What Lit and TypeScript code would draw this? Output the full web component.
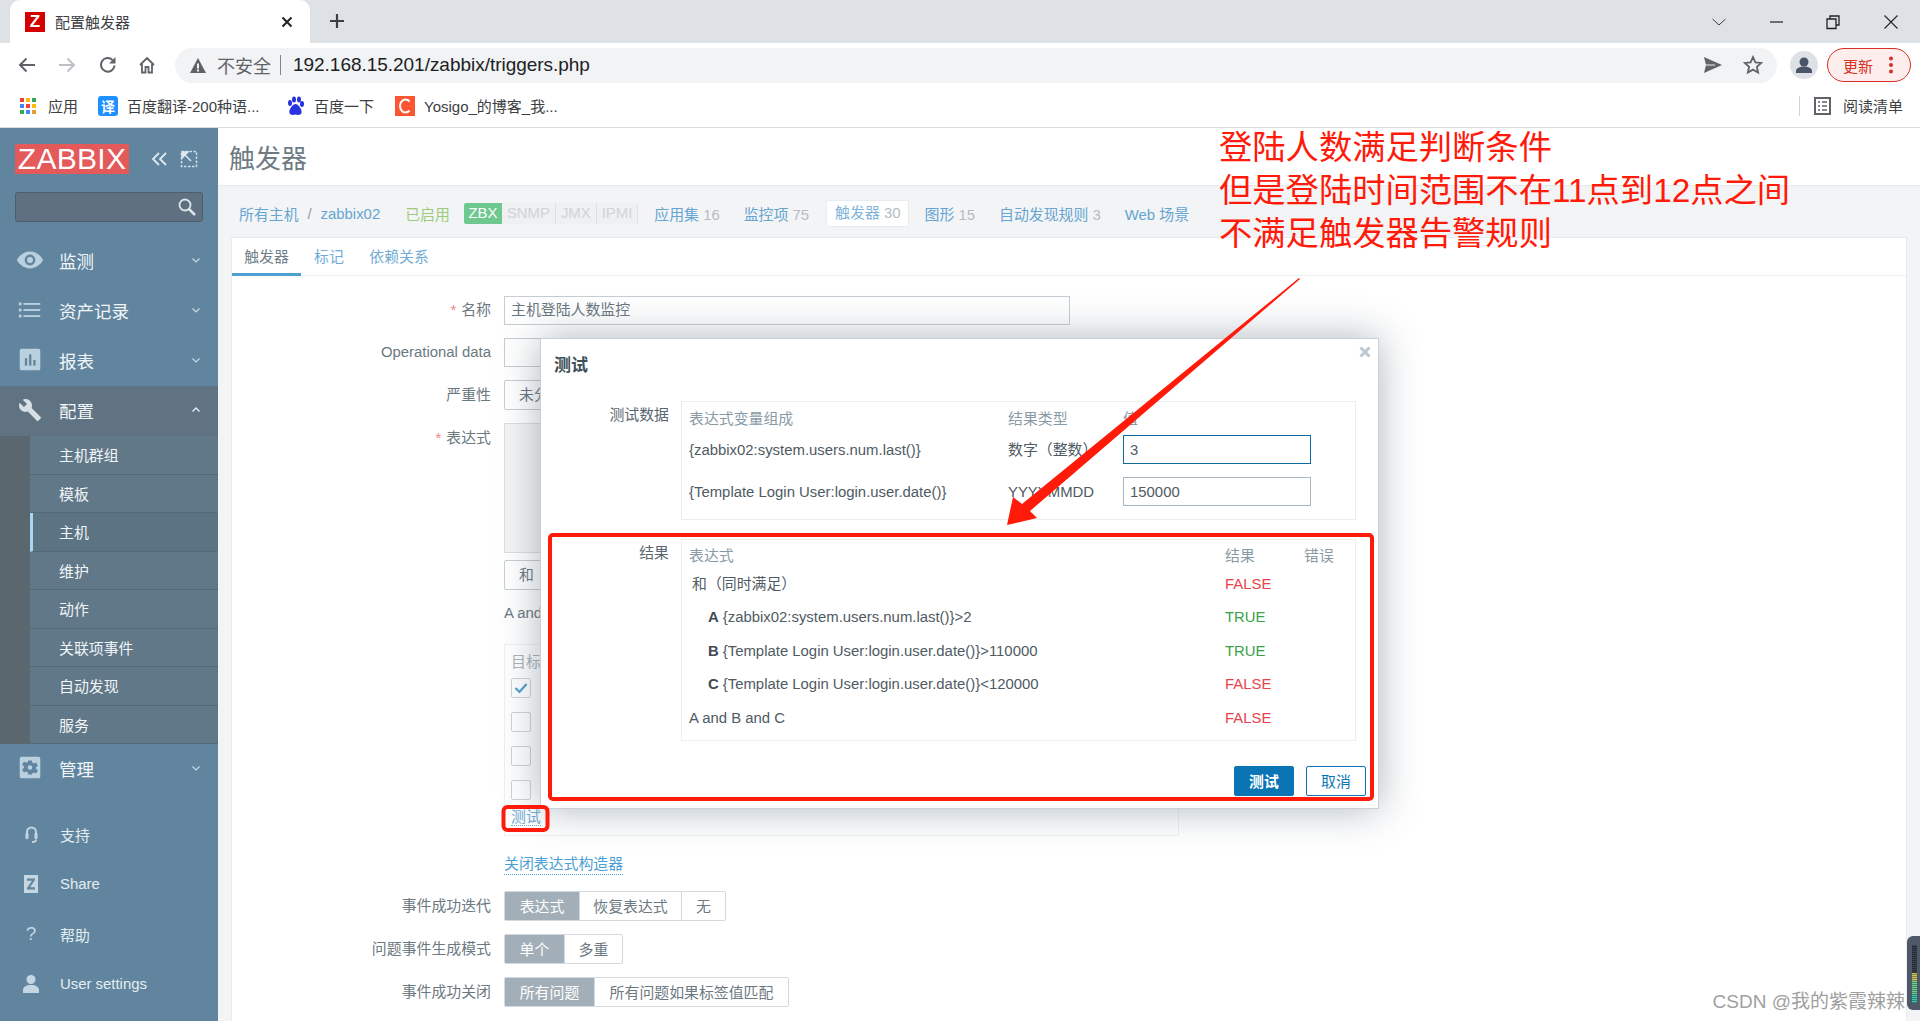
import { LitElement, html, css, svg } from "lit";
import { customElement } from "lit/decorators.js";

const FONT = css`"Liberation Sans", "Noto Sans CJK SC", sans-serif`;

const icons = {
  eye: html`<svg class="mi" viewBox="0 0 30 24"><path fill="#b9d0de" fill-rule="evenodd" d="M15 3C8 3 3 8 1 12c2 4 7 9 14 9s12-5 14-9c-2-4-7-9-14-9zm0 3.2a5.8 5.8 0 1 1 0 11.6 5.8 5.8 0 0 1 0-11.6zm0 2.6a3.2 3.2 0 1 0 0 6.4 3.2 3.2 0 0 0 0-6.4z"/></svg>`,
  list: html`<svg class="mi" viewBox="0 0 30 24"><g fill="#b9d0de"><rect x="3" y="4" width="3" height="3"/><rect x="3" y="10.5" width="3" height="3"/><rect x="3" y="17" width="3" height="3"/><rect x="8" y="4.500" width="18" height="2"/><rect x="8" y="11" width="18" height="2"/><rect x="8" y="17.500" width="18" height="2"/></g></svg>`,
  chart: html`<svg class="mi" viewBox="0 0 30 24"><rect x="4" y="0" width="22" height="23" rx="2" fill="#b9d0de"/><g fill="#61859e"><rect x="9.500" y="10" width="2.500" height="8"/><rect x="14" y="6" width="2.500" height="12"/><rect x="18.500" y="12" width="2.500" height="6"/></g></svg>`,
  wrench: html`<svg class="mi" viewBox="0 0 24 24"><path fill="#d6e0e6" d="M22.7 19l-9.100-9.100c.9-2.300.4-5-1.500-6.900-2-2-5-2.400-7.400-1.300L9 6 6 9 1.600 4.700C.4 7.100.9 10.100 2.900 12.100c1.900 1.900 4.600 2.400 6.900 1.500l9.100 9.100c.4.4 1 .4 1.400 0l2.300-2.300c.5-.4.5-1.100.1-1.400z"/></svg>`,
  gear: html`<svg class="mi" viewBox="0 0 30 24"><rect x="4" y="0" width="22" height="23" rx="2" fill="#b9d0de"/><path fill="#61859e" fill-rule="evenodd" d="M13 4h4l.5 2.500 1.700.8 2.300-1.200 2 3.400-2 1.500v2l2 1.500-2 3.400-2.300-1.200-1.700.8L17 19h-4l-.5-2.500-1.700-.8-2.300 1.200-2-3.400 2-1.500v-2l-2-1.500 2-3.400 2.300 1.200 1.700-.8zm2 5a2.500 2.500 0 1 0 0 5 2.500 2.500 0 0 0 0-5z"/></svg>`,
  head: html`<svg class="bi" viewBox="0 0 24 24"><path fill="none" stroke="#c4d6e1" stroke-width="2" d="M8 14V10a4.500 4.500 0 0 1 9 0v4M13 20c2.500 0 4-1 4-2.500"/><rect x="6.500" y="11" width="3" height="6" rx="1" fill="#c4d6e1"/><rect x="15.500" y="11" width="3" height="6" rx="1" fill="#c4d6e1"/></svg>`,
  z: html`<svg class="bi" viewBox="0 0 24 24"><path fill="#c4d6e1" fill-rule="evenodd" d="M5 3h14v18H5zm3 3.500v2.200h5L8 16v1.500h8v-2.200h-5l5-7.300V6.500z"/></svg>`,
  user: html`<svg class="bi" viewBox="0 0 24 24"><g fill="#c4d6e1"><circle cx="12" cy="7.500" r="4.500"/><path d="M4 21v-3c0-3 3-5 8-5s8 2 8 5v3z"/></g></svg>`,
  chevD: html`<svg class="chev" viewBox="0 0 10 10"><path d="M1.500 3.500 5 7l3.500-3.500" fill="none" stroke="#c9d9e3" stroke-width="1.200"/></svg>`,
  chevU: html`<svg class="chev" viewBox="0 0 10 10"><path d="M1.500 6.500 5 3l3.500 3.500" fill="none" stroke="#e4ecf1" stroke-width="1.400"/></svg>`,
};

@customElement("app-root")
export class AppRoot extends LitElement {
  static styles = css`
    :host { display: block; position: relative; width: 1920px; height: 1021px; overflow: hidden; background: #fff; font-family: ${FONT}; font-size: 14.900px; color: #5f6b73; }
    * { box-sizing: border-box; }
    /* browser chrome */
    .strip { height: 43px; background: #dee1e6; display: flex; align-items: stretch; padding-left: 10px; position: relative; }
    .tab { width: 300px; background: #fff; border-radius: 10px 10px 0 0; display: flex; align-items: center; padding-left: 15px; color: #3c4043; font-size: 15px; }
    .fav { width: 20px; height: 20px; background: #d40000; color: #fff; font: bold 17px/20px "Liberation Sans", sans-serif; text-align: center; margin-right: 10px; }
    .tabt { width: 225px; }
    .tabx { width: 14px; height: 14px; }
    .plus { width: 16px; height: 16px; margin: 13px 0 0 19px; }
    .winctl { margin-left: auto; display: flex; align-items: center; }
    .winctl svg { width: 16px; height: 16px; display: block; }
    .w1 { margin-right: 41px; } .w2 { margin-right: 41px; } .w3 { margin-right: 42px; } .w4 { margin-right: 21px; }
    .tool { height: 44px; display: flex; align-items: center; padding-left: 17px; }
    .nb { width: 20px; height: 20px; margin-right: 20px; display: block; }
    .nb.r { margin-left: 1px; margin-right: 19px; }
    .nb.last { margin-right: 18px; }
    .omni { width: 1602px; height: 35px; border-radius: 18px; background: #f1f3f4; display: flex; align-items: center; padding-left: 15px; position: relative; }
    .warn { width: 16px; height: 15px; margin-right: 11px; }
    .unsafe { color: #5f6368; font-size: 18px; }
    .sep { width: 1px; height: 20px; background: #80868b; margin: 0 12px 0 9px; }
    .url { color: #202124; font-size: 19px; letter-spacing: -.03px; }
    .omr { margin-left: auto; display: flex; align-items: center; padding-right: 14px; }
    .omr svg { display: block; }
    .send { width: 20px; height: 18px; margin-right: 20px; }
    .star { width: 20px; height: 20px; }
    .avatar { width: 28px; height: 28px; border-radius: 50%; background: #dee1e6; margin-left: 13px; }
    .upd { width: 84px; height: 34px; border: 1.500px solid #d93025; border-radius: 17px; background: #fdeeed; margin-left: 9px; display: flex; align-items: center; padding-left: 15px; color: #d93025; font-size: 15px; position: relative; }
    .dots { margin-left: 16px; width: 4px; height: 18px; }
    .marks { height: 41px; display: flex; align-items: center; padding: 0 0 3px 20px; border-bottom: 1.500px solid #dadce0; color: #3c4043; font-size: 15px; white-space: nowrap; }
    .bico { width: 20px; height: 20px; margin-right: 9px; flex: none; display: block; }
    .bm1 { width: 50px; } .bm2 { width: 158px; } .bm3 { width: 81px; } .bm4 { width: 150px; }
    .bmico1 { width: 16px; height: 16px; margin-right: 12px; flex: none; }
    .bmrt { margin-left: auto; display: flex; align-items: center; padding-right: 17px; }
    .bmdiv { width: 1px; height: 20px; background: #d0d3d7; margin-right: 14px; }
    .rdico { width: 17px; height: 18px; margin-right: 12px; }
    /* app layout */
    .main { display: flex; height: 893px; }
    .side { width: 218px; flex: none; background: #61859e; color: #f1f5f8; display: flex; flex-direction: column; }
    .logorow { height: 46px; margin-top: 16px; display: flex; align-items: flex-start; padding-left: 15px; }
    .logo { width: 114px; height: 30px; background: #e45959; color: #fff; font-size: 30px; line-height: 30px; text-align: center; letter-spacing: .3px; }
    .lgic { width: 18px; height: 18px; margin-top: 6px; }
    .lgic1 { margin-left: 21px; } .lgic2 { margin-left: 12px; }
    .search { width: 188px; height: 30px; margin: 2px 0 14px 15px; background: #5f7181; border: 1px solid #4d5e6b; border-radius: 3px; display: flex; align-items: center; justify-content: flex-end; padding-right: 5px; }
    .search svg { width: 20px; height: 20px; }
    .m { height: 50px; display: flex; align-items: center; font-size: 17.500px; padding: 0 0 2px 16px; }
    .m .mi { width: 28px; height: 24px; margin-right: 15px; display: block; flex: none; }
    .m .chev { width: 10px; height: 10px; margin-left: auto; margin-right: 17px; }
    .m.on { background: #5f7382; }
    .sub { background: #5a676e; padding-left: 30px; height: 308px; }
    .si { height: 38.500px; background: #617888; border-bottom: 1.500px solid #556875; display: flex; align-items: center; padding-left: 29px; font-size: 14.900px; }
    .si.on { background: #5c7383; border-left: 3px solid #a9d6f5; padding-left: 26px; }
    .bottom { margin-top: 15px; }
    .bt { height: 50px; display: flex; align-items: center; padding-left: 19px; font-size: 14.900px; color: #e4edf2; }
    .bt .bi { width: 24px; height: 24px; margin-right: 17px; display: block; flex: none; }
    .q { width: 24px; margin-right: 17px; text-align: center; font-size: 19px; color: #c4d6e1; }
    .cont { flex: 1; background: #f3f4f6; min-width: 0; display: flex; flex-direction: column; }
    .head { height: 58px; background: #fff; border-bottom: 1px solid #e6e9ec; padding-left: 11px; display: flex; align-items: center; font-size: 26px; color: #6e7b84; }
    .crumb { height: 51px; padding: 4px 0 0 21px; display: flex; align-items: center; color: #66a5d1; font-size: 14.900px; white-space: nowrap; }
    .crumb .sl { color: #8e9ba4; margin: 0 9px 0 9px; width: 4px; }
    .en { color: #9ccc7c; margin: 0 14px 0 25px; }
    .tags { display: flex; height: 21px; line-height: 21px; margin-right: 16px; border-radius: 2px; overflow: hidden; }
    .tg { background: #eef0f2; color: #ced4d8; padding: 0 5px; border-right: 1px solid #dde1e4; }
    .tg.z { background: #6fc88f; color: #fff; width: 38px; text-align: center; padding: 0; border: 0; }
    .cnt { color: #b4bcc2; }
    .ci { margin-right: 24px; }
    .ci.box2 { background: #fff; border: 1px solid #e9ecef; border-radius: 2px; height: 27px; line-height: 25px; padding: 0 8px; margin: 0 15px 0 -7px; color: #7fb4da; }
    .card { margin-left: 13px; width: 1676px; background: #fff; border: 1px solid #e9ecef; border-bottom: 0; flex: 1; }
    .tabs { height: 38px; display: flex; border-bottom: 1px solid #eceff1; color: #72acd6; }
    .t { display: flex; align-items: center; height: 38px; }
    .t.on { color: #70808a; border-bottom: 3px solid #4f9fd3; width: 69px; justify-content: center; }
    .t.l { padding: 0 12.500px 3px 13px; }
    .form { display: grid; grid-template-columns: 259px 1fr; column-gap: 13px; row-gap: 13px; padding-top: 20px; }
    .lb { text-align: right; color: #6c7981; line-height: 29px; white-space: nowrap; }
    .lb.ex { line-height: 31px; }
    .req::before { content: "*"; color: #e88; margin-right: 5px; }
    .in { width: 566px; height: 29px; border: 1px solid #c5ced4; padding-left: 6px; line-height: 27px; color: #6b7780; }
    .sel { width: 110px; height: 30px; border: 1px solid #c5ced4; border-radius: 2px; padding-left: 14px; line-height: 28px; color: #6b7780; }
    .ta { width: 566px; height: 130px; background: #f3f4f5; border: 1px solid #d9dee2; }
    .and { margin-top: 7px; width: 110px; padding-left: 14px; }
    .aand { margin-top: 15px; height: 16px; line-height: 16px; color: #6b7780; }
    .tbl { margin-top: 23px; width: 675px; height: 192px; border: 1px solid #eef0f2; padding: 7px 6px 0; position: relative; }
    .th { height: 20px; line-height: 20px; color: #a9b5bd; margin-bottom: 6px; }
    .cb { width: 20px; height: 20px; border: 1px solid #cdd4d9; border-radius: 2px; margin-bottom: 14px; display: flex; align-items: center; justify-content: center; }
    .cb svg { width: 14px; height: 12px; }
    .tlink { color: #72acd6; border-bottom: 1px dotted #72acd6; display: inline-block; line-height: 16px; margin-top: -5px; vertical-align: top; }
    .close { color: #4c9fd4; border-bottom: 1px dotted #4c9fd4; display: inline-block; line-height: 18px; margin-top: 19px; height: 20px; margin-bottom: 3px; }
    .seg { display: inline-flex; height: 30px; border: 1px solid #d3d9de; border-radius: 2px; }
    .sg { display: flex; align-items: center; justify-content: center; border-left: 1px solid #d3d9de; color: #6c7981; padding-bottom: 2px; }
    .sg.on { background: #a3afb8; color: #fff; border-left: 0; }
    .w75 { width: 74px; } .w103 { width: 102px; } .w44 { width: 44px; }
    .w60 { width: 59px; } .w58 { width: 58px; } .w90 { width: 89px; } .w194 { width: 194px; }
    .fieldlb { line-height: 30px; }
    /* modal */
    .modal { position: absolute; left: 540px; top: 338px; width: 839px; height: 471px; background: #fff; border: 1px solid #c9d1d7; box-shadow: 0 0 38px rgba(62, 82, 98, .42); padding-top: 16px; }
    .mtitle { font-size: 17px; font-weight: bold; color: #3f4f59; padding-left: 13px; height: 46px; line-height: 22px; }
    .mx { position: absolute; right: 7px; top: 7px; width: 12px; height: 12px; }
    .mrow { display: grid; grid-template-columns: 128px 675px; column-gap: 12px; margin-bottom: 19px; }
    .mlb { text-align: right; color: #5a6770; line-height: 18px; padding-top: 5px; }
    .box { border: 1px solid #ebedef; }
    .g1 { height: 119px; padding: 8px 0 0 7px; display: grid; grid-template-columns: 319px 115px 188px; grid-template-rows: 25px 42px 29px; }
    .hd { color: #8a9aa5; line-height: 18px; }
    .tx { color: #4f5b63; line-height: 29px; padding-top: 1px; white-space: nowrap; }
    .val { height: 29px; border: 1px solid #a9b7c1; padding-left: 6px; line-height: 28px; color: #4f5b63; }
    .val.f { border-color: #0f6aa0; }
    .g2 { height: 202px; padding: 5px 0 0 7px; display: grid; grid-template-columns: 536px 79px 50px; grid-template-rows: 22px repeat(5, 33.500px); align-items: center; }
    .ind1 { padding-left: 3px; } .ind2 { padding-left: 19px; }
    .ind2 b { color: #3f4a52; margin-right: 4px; }
    .fl { color: #e8434c; } .tr { color: #3aa14a; }
    .btns { display: flex; justify-content: flex-end; gap: 12px; padding-right: 12px; margin-top: 25px; }
    .btn { width: 60px; height: 30px; border: 1px solid #0a75b5; border-radius: 2px; display: flex; align-items: center; justify-content: center; color: #0a75b5; padding-bottom: 1px; }
    .btn.p { background: #0a75b5; color: #fff; font-weight: bold; }
    /* annotation */
    .ann { position: absolute; left: 0; top: 0; width: 1920px; height: 1021px; pointer-events: none; }
    .note { position: absolute; left: 1219px; top: 127px; font-size: 33.300px; line-height: 42.800px; color: #ff1a0a; white-space: nowrap; }
    .wm { position: absolute; right: 15px; top: 990px; color: #a0a0a0; font-size: 19px; line-height: 24px; white-space: nowrap; }
    .meter { position: absolute; left: 1907px; top: 936px; width: 13px; height: 74px; background: #4f5868; border-radius: 6px 0 0 6px; padding: 9px 0 0 5px; }
    .bars { width: 5px; height: 58px; background: repeating-linear-gradient(to bottom, transparent 0 1px, rgba(0,0,0,.35) 1px 2px), linear-gradient(to bottom, #39414f 0 48%, #c7c85a 48% 62%, #6fcf90 62% 85%, #3fc9b0 85%); }
  `;

  render() {
    const subs = ["主机群组", "模板", "主机", "维护", "动作", "关联项事件", "自动发现", "服务"];
    return html`
      <div class="strip">
        <div class="tab">
          <span class="fav">Z</span><span class="tabt">配置触发器</span>
          <svg class="tabx" viewBox="0 0 14 14"><path d="M2.500 2.500l9 9M11.500 2.500l-9 9" stroke="#202124" stroke-width="2"/></svg>
        </div>
        <svg class="plus" viewBox="0 0 16 16"><path d="M8 1v14M1 8h14" stroke="#3c4043" stroke-width="2.200"/></svg>
        <div class="winctl">
          <svg class="w1" viewBox="0 0 16 16"><path d="M1.500 5 8 11l6.500-6" fill="none" stroke="#3c4043"/></svg>
          <svg class="w2" viewBox="0 0 16 16"><path d="M2 8h13" stroke="#202124" stroke-width="1.200"/></svg>
          <svg class="w3" viewBox="0 0 16 16"><path d="M2 5h9v9.500H2zM5 5V2h9v9h-3" fill="none" stroke="#202124" stroke-width="1.300"/></svg>
          <svg class="w4" viewBox="0 0 16 16"><path d="M1.500 1.500l13 13M14.500 1.500l-13 13" stroke="#202124" stroke-width="1.100"/></svg>
        </div>
      </div>
      <div class="tool">
        <svg class="nb" viewBox="0 0 20 20"><path d="M18 10H3M9.500 3.500 3 10l6.500 6.500" fill="none" stroke="#5f6368" stroke-width="2"/></svg>
        <svg class="nb" viewBox="0 0 20 20"><path d="M2 10h15M10.500 3.500 17 10l-6.500 6.500" fill="none" stroke="#bdc1c6" stroke-width="2"/></svg>
        <svg class="nb r" viewBox="0 0 20 20"><path d="M16.500 10.500A6.800 6.800 0 1 1 14.500 5" fill="none" stroke="#5f6368" stroke-width="2"/><path d="M17.500 2v6.500H11z" fill="#5f6368"/></svg>
        <svg class="nb last" viewBox="0 0 20 20"><path d="M3 10l7-7 7 7M5 9v8.500h3.500V12h3v5.500H15V9" fill="none" stroke="#5f6368" stroke-width="1.800"/></svg>
        <div class="omni">
          <svg class="warn" viewBox="0 0 16 15"><path d="M8 0l8 15H0zM7 5.500v5h2v-5zm0 6v2h2v-2z" fill="#5f6368" fill-rule="evenodd"/></svg>
          <span class="unsafe">不安全</span><span class="sep"></span><span class="url">192.168.15.201/zabbix/triggers.php</span>
          <div class="omr">
            <svg class="send" viewBox="0 0 20 18"><path d="M1 1l18 8-18 8 2-8z" fill="#5f6368"/><path d="M3 9h9" stroke="#f1f3f4" stroke-width="1"/></svg>
            <svg class="star" viewBox="0 0 20 20"><path d="M10 2l2.400 5.300 5.800.6-4.300 3.900 1.200 5.700L10 14.600l-5.100 2.900 1.200-5.700L1.800 7.900l5.800-.6z" fill="none" stroke="#5f6368" stroke-width="1.800"/></svg>
          </div>
        </div>
        <svg class="avatar" viewBox="0 0 28 28"><g fill="#4a5568"><circle cx="14" cy="11" r="4.500"/><path d="M6 22v-2c0-3 4-4.500 8-4.500s8 1.500 8 4.500v2z"/></g></svg>
        <div class="upd">更新<svg class="dots" viewBox="0 0 4 18"><g fill="#d93025"><circle cx="2" cy="2.500" r="2"/><circle cx="2" cy="9" r="2"/><circle cx="2" cy="15.500" r="2"/></g></svg></div>
      </div>
      <div class="marks">
        <svg class="bmico1" viewBox="0 0 16 16">
          ${[0, 1, 2].map((r) => [0, 1, 2].map((c) => svg`<rect x="${c * 6}" y="${r * 6}" width="4" height="4" fill="${["#ea4335", "#fbbc05", "#34a853", "#4285f4", "#ea4335", "#fbbc05", "#34a853", "#4285f4", "#ea9a35"][r * 3 + c]}"/>`))}
        </svg>
        <span class="bm1">应用</span>
        <svg class="bico" viewBox="0 0 20 20"><rect width="20" height="20" rx="3" fill="#1e90ff"/><text x="10" y="15.500" text-anchor="middle" font-size="14" font-weight="bold" fill="#fff">译</text></svg>
        <span class="bm2">百度翻译-200种语...</span>
        <svg class="bico" viewBox="0 0 20 20"><g fill="#2932e1"><ellipse cx="5" cy="7" rx="2" ry="3"/><ellipse cx="9" cy="3.500" rx="2" ry="3"/><ellipse cx="14" cy="3.500" rx="2" ry="3"/><ellipse cx="17" cy="8" rx="2" ry="3"/><path d="M10.500 8c3 0 7 6 6 9-1 2.500-4 2-6 1.500-2 .5-5 1-6-1.500-1-3 3-9 6-9z"/></g></svg>
        <span class="bm3">百度一下</span>
        <svg class="bico" viewBox="0 0 20 20"><rect width="20" height="20" fill="#fc5531"/><path d="M14.500 5.500A5.500 6.500 0 1 0 14.500 14.500" fill="none" stroke="#fff" stroke-width="2"/></svg>
        <span class="bm4">Yosigo_的博客_我...</span>
        <div class="bmrt">
          <span class="bmdiv"></span>
          <svg class="rdico" viewBox="0 0 17 18"><rect x="1" y="1" width="15" height="16" fill="none" stroke="#5f6368" stroke-width="2"/><path d="M4 5h2M8 5h5M4 9h2M8 9h5M4 13h2M8 13h5" stroke="#5f6368" stroke-width="1.500"/></svg>
          <span>阅读清单</span>
        </div>
      </div>
      <div class="main">
        <aside class="side">
          <div class="logorow">
            <div class="logo">ZABBIX</div>
            <svg class="lgic lgic1" viewBox="0 0 18 18"><path d="M9 3 3 9l6 6M16 3l-6 6 6 6" fill="none" stroke="#dfe8ee" stroke-width="1.800"/></svg>
            <svg class="lgic lgic2" viewBox="0 0 18 18"><path d="M1.500 1.500h15v15h-15z" fill="none" stroke="#cfdde6" stroke-width="1.500" stroke-dasharray="2.500 1.500"/><path d="M2 2h6L2 8zM3 3l8 8" fill="#dfe8ee" stroke="#dfe8ee" stroke-width="1.500"/></svg>
          </div>
          <div class="search"><svg viewBox="0 0 20 20"><circle cx="8" cy="8" r="5.500" fill="none" stroke="#dce6ec" stroke-width="1.800"/><path d="M12 12l6 6" stroke="#dce6ec" stroke-width="2.500"/></svg></div>
          <div class="m">${icons.eye}监测${icons.chevD}</div>
          <div class="m">${icons.list}资产记录${icons.chevD}</div>
          <div class="m">${icons.chart}报表${icons.chevD}</div>
          <div class="m on">${icons.wrench}配置${icons.chevU}</div>
          <div class="sub">${subs.map((s, i) => html`<div class="si ${i === 2 ? "on" : ""}">${s}</div>`)}</div>
          <div class="m">${icons.gear}管理${icons.chevD}</div>
          <div class="bottom">
            <div class="bt">${icons.head}支持</div>
            <div class="bt">${icons.z}Share</div>
            <div class="bt"><span class="q">?</span>帮助</div>
            <div class="bt">${icons.user}User settings</div>
          </div>
        </aside>
        <section class="cont">
          <div class="head">触发器</div>
          <div class="crumb">
            <span>所有主机</span><span class="sl">/</span><span>zabbix02</span>
            <span class="en">已启用</span>
            <span class="tags"><span class="tg z">ZBX</span><span class="tg">SNMP</span><span class="tg">JMX</span><span class="tg">IPMI</span></span>
            <span class="ci">应用集 <span class="cnt">16</span></span>
            <span class="ci">监控项 <span class="cnt">75</span></span>
            <span class="ci box2">触发器 <span class="cnt">30</span></span>
            <span class="ci">图形 <span class="cnt">15</span></span>
            <span class="ci">自动发现规则 <span class="cnt">3</span></span>
            <span class="ci">Web 场景</span>
          </div>
          <div class="card">
            <div class="tabs"><span class="t on">触发器</span><span class="t l">标记</span><span class="t l">依赖关系</span></div>
            <div class="form">
              <div class="lb req">名称</div><div class="in">主机登陆人数监控</div>
              <div class="lb">Operational data</div><div class="in"></div>
              <div class="lb fieldlb">严重性</div><div class="sel">未分类</div>
              <div class="lb ex req">表达式</div>
              <div>
                <div class="ta"></div>
                <div class="sel and">和</div>
                <div class="aand">A and B and C</div>
                <div class="tbl">
                  <div class="th">目标</div>
                  <div class="cb"><svg viewBox="0 0 14 12"><path d="M1.500 6l4 4 7-8" fill="none" stroke="#4f9fd3" stroke-width="2.200"/></svg></div>
                  <div class="cb"></div>
                  <div class="cb"></div>
                  <div class="cb"></div>
                  <span class="tlink">测试</span>
                </div>
                <span class="close">关闭表达式构造器</span>
              </div>
              <div class="lb fieldlb">事件成功迭代</div>
              <div><div class="seg"><span class="sg on w75">表达式</span><span class="sg w103">恢复表达式</span><span class="sg w44">无</span></div></div>
              <div class="lb fieldlb">问题事件生成模式</div>
              <div><div class="seg"><span class="sg on w60">单个</span><span class="sg w58">多重</span></div></div>
              <div class="lb fieldlb">事件成功关闭</div>
              <div><div class="seg"><span class="sg on w90">所有问题</span><span class="sg w194">所有问题如果标签值匹配</span></div></div>
            </div>
          </div>
        </section>
      </div>
      <div class="modal">
        <svg class="mx" viewBox="0 0 12 12"><path d="M1.500 1.500l9 9M10.500 1.500l-9 9" stroke="#bcc7ce" stroke-width="3"/></svg>
        <div class="mtitle">测试</div>
        <div class="mrow">
          <div class="mlb">测试数据</div>
          <div class="box g1">
            <div class="hd">表达式变量组成</div><div class="hd">结果类型</div><div class="hd">值</div>
            <div class="tx">{zabbix02:system.users.num.last()}</div><div class="tx">数字（整数）</div><div class="val f">3</div>
            <div class="tx">{Template Login User:login.user.date()}</div><div class="tx">YYYYMMDD</div><div class="val">150000</div>
          </div>
        </div>
        <div class="mrow">
          <div class="mlb">结果</div>
          <div class="box g2">
            <div class="hd">表达式</div><div class="hd">结果</div><div class="hd">错误</div>
            <div class="tx ind1">和（同时满足）</div><div class="fl">FALSE</div><div></div>
            <div class="tx ind2"><b>A</b>{zabbix02:system.users.num.last()}>2</div><div class="tr">TRUE</div><div></div>
            <div class="tx ind2"><b>B</b>{Template Login User:login.user.date()}>110000</div><div class="tr">TRUE</div><div></div>
            <div class="tx ind2"><b>C</b>{Template Login User:login.user.date()}&lt;120000</div><div class="fl">FALSE</div><div></div>
            <div class="tx">A and B and C</div><div class="fl">FALSE</div><div></div>
          </div>
        </div>
        <div class="btns"><div class="btn p">测试</div><div class="btn">取消</div></div>
      </div>
      <svg class="ann" viewBox="0 0 1920 1021">
        <rect x="550" y="535" width="822" height="264" rx="3" fill="none" stroke="#ff1a0a" stroke-width="4"/>
        <rect x="503.500" y="807" width="44" height="23" rx="4" fill="none" stroke="#ff1a0a" stroke-width="4"/>
        <polygon fill="#ff1a0a" points="1299,278 1300,279 1030,511 1037,518 1007,525 1013,497 1022,504"/>
      </svg>
      <div class="note">登陆人数满足判断条件<br />但是登陆时间范围不在11点到12点之间<br />不满足触发器告警规则</div>
      <div class="wm">CSDN @我的紫霞辣辣</div>
      <div class="meter"><div class="bars"></div></div>
    `;
  }
}
